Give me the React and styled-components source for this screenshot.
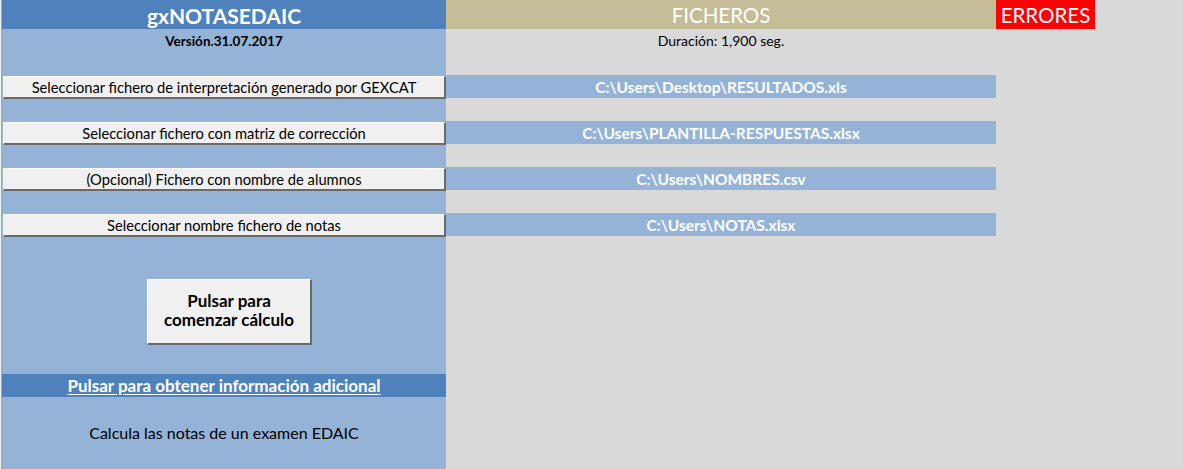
import React from "react";
import styled, { createGlobalStyle } from "styled-components";

const GlobalStyle = createGlobalStyle`
  html, body { margin: 0; padding: 0; background: #D9D9D9; }
  body { font-family: Lato, "Liberation Sans", sans-serif; overflow: hidden; }
`;

const Sheet = styled.div`
  display: flex;
  width: 1183px;
  height: 469px;
  background: #D9D9D9;
`;

const RowHeaderEdge = styled.div`
  width: 1px;
  background: #F2F2F2;
  border-right: 1px solid #A6A6A6;
`;

const LeftPanel = styled.div`
  width: 444px;
  display: flex;
  flex-direction: column;
  background: #95B3D7;
`;

const RightPanel = styled.div`
  display: flex;
  flex-direction: column;
`;

const TitleCell = styled.div`
  height: 29px;
  background: #4F81BD;
  color: #fff;
  font-weight: 700;
  font-size: 21px;
  display: flex;
  align-items: center;
  justify-content: center;
  padding-top: 1px;
  box-sizing: border-box;
`;

const Row = styled.div`
  height: 23px;
  display: flex;
  align-items: flex-end;
  justify-content: center;
  box-sizing: border-box;
  padding-bottom: 3px;
  font-size: ${(p) => p.$size ?? 12}px;
  font-weight: ${(p) => (p.$bold ? 700 : 400)};
  color: #000;
`;

const ButtonRow = styled.div`
  height: 23px;
  display: flex;
  padding: 1px 0 0 1px;
  box-sizing: border-box;
`;

const FormButton = styled.button`
  flex: 1;
  height: 23px;
  margin: 0;
  padding: 0;
  background: #F0F0F0;
  border-style: solid;
  border-width: 1px 2px 2px 1px;
  border-color: #FFFFFF #6A6A6A #6A6A6A #FFFFFF;
  font-family: Lato, "Liberation Sans", sans-serif;
  font-size: 14.7px;
  color: #000;
  display: flex;
  align-items: center;
  justify-content: center;
  cursor: pointer;
`;

const BigButtonArea = styled.div`
  height: 138px;
  display: flex;
  justify-content: flex-start;
  align-items: flex-start;
  padding: 43px 0 0 145px;
  box-sizing: border-box;
`;

const BigButton = styled.button`
  width: 165px;
  height: 66px;
  margin: 0;
  padding: 0 0 3px 0;
  background: #F0F0F0;
  border-style: solid;
  border-width: 1px 2px 2px 1px;
  border-color: #FFFFFF #6A6A6A #6A6A6A #FFFFFF;
  font-family: Lato, "Liberation Sans", sans-serif;
  font-weight: 700;
  font-size: 17px;
  line-height: 19px;
  color: #000;
  cursor: pointer;
`;

const InfoBar = styled.div`
  height: 23px;
  background: #4F81BD;
  display: flex;
  align-items: center;
  justify-content: center;
`;

const InfoLink = styled.a`
  color: #fff;
  font-weight: 700;
  font-size: 17px;
  text-decoration: underline;
  text-underline-offset: 2px;
  cursor: pointer;
`;

const Description = styled.div`
  flex: 1;
  display: flex;
  justify-content: center;
  align-items: flex-start;
  padding-top: 26px;
  font-size: 16px;
  color: #000;
`;

const HeaderRow = styled.div`
  height: 29px;
  display: flex;
`;

const HeaderCell = styled.div`
  height: 29px;
  width: ${(p) => p.$w}px;
  background: ${(p) => p.$bg};
  color: #fff;
  font-size: 20.5px;
  display: flex;
  align-items: center;
  justify-content: center;
  padding-top: 1px;
  box-sizing: border-box;
`;

const InfoRow = styled.div`
  height: 23px;
  width: 550px;
  display: flex;
  justify-content: center;
  align-items: flex-end;
  padding-bottom: 3px;
  box-sizing: border-box;
  font-size: 14px;
  color: #000;
`;

const Spacer = styled.div`
  height: 23px;
`;

const PathBar = styled.div`
  height: 23px;
  width: 550px;
  background: #95B3D7;
  color: #fff;
  font-weight: 700;
  font-size: 15.5px;
  display: flex;
  align-items: center;
  justify-content: center;
  box-sizing: border-box;
`;

const files = [
  { label: "Seleccionar fichero de interpretación generado por GEXCAT", path: "C:\\Users\\Desktop\\RESULTADOS.xls" },
  { label: "Seleccionar fichero con matriz de corrección", path: "C:\\Users\\PLANTILLA-RESPUESTAS.xlsx" },
  { label: "(Opcional) Fichero con nombre de alumnos", path: "C:\\Users\\NOMBRES.csv" },
  { label: "Seleccionar nombre fichero de notas", path: "C:\\Users\\NOTAS.xlsx" },
];

export default function App() {
  return (
    <>
      <GlobalStyle />
      <Sheet>
        <RowHeaderEdge />
        <LeftPanel>
          <TitleCell>gxNOTASEDAIC</TitleCell>
          <Row $bold $size={13.5}>Versión.31.07.2017</Row>
          <Spacer />
          {files.map((f, i) => (
            <React.Fragment key={f.label}>
              <ButtonRow>
                <FormButton>{f.label}</FormButton>
              </ButtonRow>
              {i < files.length - 1 && <Spacer />}
            </React.Fragment>
          ))}
          <BigButtonArea>
            <BigButton>
              Pulsar para
              <br />
              comenzar cálculo
            </BigButton>
          </BigButtonArea>
          <InfoBar>
            <InfoLink>Pulsar para obtener información adicional</InfoLink>
          </InfoBar>
          <Description>Calcula las notas de un examen EDAIC</Description>
        </LeftPanel>
        <RightPanel>
          <HeaderRow>
            <HeaderCell $w={550} $bg="#C4BD97">FICHEROS</HeaderCell>
            <HeaderCell $w={99} $bg="#FF0000">ERRORES</HeaderCell>
          </HeaderRow>
          <InfoRow>Duración: 1,900 seg.</InfoRow>
          <Spacer />
          {files.map((f, i) => (
            <React.Fragment key={f.path}>
              <PathBar>{f.path}</PathBar>
              {i < files.length - 1 && <Spacer />}
            </React.Fragment>
          ))}
        </RightPanel>
      </Sheet>
    </>
  );
}
